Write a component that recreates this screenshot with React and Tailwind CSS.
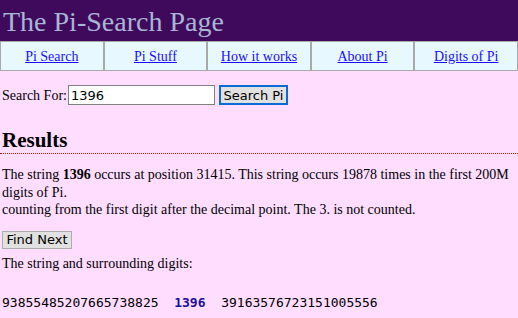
import React from 'react'

const links = ['Pi Search', 'Pi Stuff', 'How it works', 'About Pi', 'Digits of Pi']

export default function App() {
  return (
    <div className="min-h-screen bg-[#ffddff] text-black font-['Liberation_Serif',serif] text-[14px]">
      {/* header */}
      <div className="h-[41px] bg-[#400a5c] pl-[3px] flex items-center">
        <h1 className="text-[28px] leading-none text-[#a8b6d6] mt-[2px]">The Pi-Search Page</h1>
      </div>

      {/* nav table */}
      <div className="flex h-[30px] border border-[#a9a9a9] bg-[#e8f8ff]">
        {links.map((l, i) => (
          <div
            key={l}
            className={`flex-1 flex items-center justify-center ${i > 0 ? 'border-l-2 border-[#a9a9a9]' : ''}`}
          >
            <a href="#" className="text-[#1a0dff] underline">{l}</a>
          </div>
        ))}
      </div>

      <div className="px-[2px]">
        {/* search form */}
        <div className="mt-[14px] flex items-center h-[20px]">
          <span className="mr-[1px]">Search For:</span>
          <input
            defaultValue="1396"
            className="w-[147px] h-[20px] border border-[#808080] bg-white px-[2px] text-[13px] font-['DejaVu_Sans',sans-serif] outline-none"
          />
          <button className="ml-[4px] h-[20px] w-[69px] border-2 border-[#0a6bd6] bg-[#e1e1e1] text-[13px] font-['DejaVu_Sans',sans-serif] leading-none">
            Search Pi
          </button>
        </div>

        {/* results */}
        <h2 className="mt-[23px] text-[21px] font-bold leading-[24px]">Results</h2>
        <div className="mt-[1px] border-b border-dotted border-[#ff0000] -mx-[2px]"></div>

        <p className="mt-[12px] leading-[17.5px]">
          The string <b>1396</b> occurs at position 31415. This string occurs 19878 times in the first 200M digits of Pi.
          <br />
          counting from the first digit after the decimal point. The 3. is not counted.
        </p>

        <button className="mt-[12px] h-[18px] w-[70px] border border-[#adadad] bg-[#e1e1e1] text-[13px] font-['DejaVu_Sans',sans-serif] leading-none">
          Find Next
        </button>

        <p className="mt-[5px] leading-[17.5px]">The string and surrounding digits:</p>

        <div className="mt-[21px] font-['DejaVu_Sans_Mono',monospace] text-[13px] whitespace-pre leading-[18px]">
          93855485207665738825  <span className="text-[#1a0d99] font-bold">1396</span>  39163576723151005556
        </div>
      </div>
    </div>
  )
}
